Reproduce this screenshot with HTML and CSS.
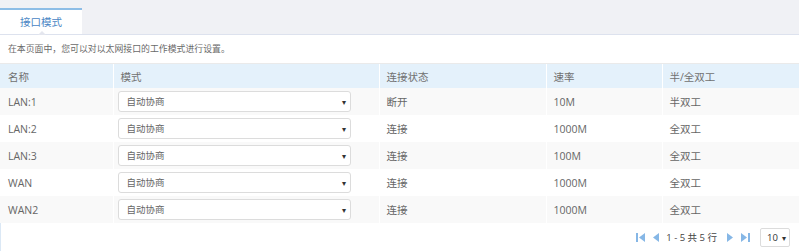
FILE: index.html
```html
<!DOCTYPE html>
<html lang="zh-CN">
<head>
    <meta charset="UTF-8">
    <title>接口模式</title>
    <link rel="stylesheet" href="styles.css">
</head>
<body>
    <div class="tabbar">
        <div class="tab">接口模式</div>
    </div>
    <div class="desc">在本页面中，您可以对以太网接口的工作模式进行设置。</div>
    <table class="grid">
        <colgroup>
            <col class="c-name">
            <col class="c-mode">
            <col class="c-state">
            <col class="c-rate">
            <col>
        </colgroup>
        <thead>
            <tr>
                <th>名称</th>
                <th>模式</th>
                <th>连接状态</th>
                <th>速率</th>
                <th>半/全双工</th>
            </tr>
        </thead>
        <tbody>
            <tr>
                <td>LAN:1</td>
                <td><div class="select">自动协商<span class="arrow">▾</span></div></td>
                <td>断开</td>
                <td>10M</td>
                <td>半双工</td>
            </tr>
            <tr>
                <td>LAN:2</td>
                <td><div class="select">自动协商<span class="arrow">▾</span></div></td>
                <td>连接</td>
                <td>1000M</td>
                <td>全双工</td>
            </tr>
            <tr>
                <td>LAN:3</td>
                <td><div class="select">自动协商<span class="arrow">▾</span></div></td>
                <td>连接</td>
                <td>100M</td>
                <td>全双工</td>
            </tr>
            <tr>
                <td>WAN</td>
                <td><div class="select">自动协商<span class="arrow">▾</span></div></td>
                <td>连接</td>
                <td>1000M</td>
                <td>全双工</td>
            </tr>
            <tr>
                <td>WAN2</td>
                <td><div class="select">自动协商<span class="arrow">▾</span></div></td>
                <td>连接</td>
                <td>1000M</td>
                <td>全双工</td>
            </tr>
        </tbody>
    </table>
    <div class="pager">
        <svg class="pg-icon" width="11" height="11" viewBox="0 0 11 11"><rect x="0" y="1" width="2" height="9"/><polygon points="9,1 9,10 3,5.5"/></svg>
        <svg class="pg-icon" width="9" height="11" viewBox="0 0 9 11"><polygon points="8,1 8,10 2,5.5"/></svg>
        <span class="pg-text">1 - 5 共 5 行</span>
        <svg class="pg-icon" width="9" height="11" viewBox="0 0 9 11"><polygon points="1,1 1,10 7,5.5"/></svg>
        <svg class="pg-icon" width="11" height="11" viewBox="0 0 11 11"><polygon points="2,1 2,10 8,5.5"/><rect x="9" y="1" width="2" height="9"/></svg>
        <div class="page-size">10<span class="arrow">▾</span></div>
    </div>
</body>
</html>
```

FILE: styles.css
```css
body {
    margin: 0;
    font-family: "Open Sans", "Noto Sans CJK SC", sans-serif;
    font-size: 10.5px;
    color: #666;
    background: #fff;
}

.tabbar {
    height: 26px;
    padding-top: 8px;
    background: #f0f1f5;
    border-bottom: 1px solid #dde2ee;
    display: flex;
}

.tab {
    width: 82px;
    height: 24px;
    line-height: 24px;
    background: #fff;
    border-top: 2px solid #8dbde6;
    color: #4a86c4;
    font-size: 10.5px;
    text-align: center;
    position: relative;
}

.tab::after {
    content: "";
    position: absolute;
    left: 38px;
    bottom: -1px;
    border-left: 4px solid transparent;
    border-right: 4px solid transparent;
    border-bottom: 4px solid #e4e6ee;
}

.desc {
    height: 28px;
    line-height: 28px;
    padding-left: 8px;
    font-size: 8.9px;
    color: #6a6a6a;
    border-bottom: 1px solid #eaeaea;
}

.grid {
    width: 100%;
    border-collapse: collapse;
    table-layout: fixed;
}

.c-name { width: 113px; }
.c-mode { width: 266px; }
.c-state { width: 167px; }
.c-rate { width: 116px; }

.grid th {
    height: 24px;
    padding: 0 0 0 7px;
    background: #e4f1fb;
    font-weight: normal;
    text-align: left;
    color: #707070;
    border-left: 1px solid #fff;
}

.grid th:first-child,
.grid td:first-child {
    padding-left: 8px;
    border-left: none;
}

.grid td {
    height: 27px;
    padding: 0 0 0 7px;
    border-left: 1px solid #fff;
    color: #666;
}

.grid tbody tr:nth-child(odd) td {
    background: #f9f9f9;
}

.grid td:nth-child(2) {
    padding-left: 4px;
}

.select {
    width: 223px;
    height: 19px;
    line-height: 19px;
    padding-left: 8px;
    border: 1px solid #dcdcdc;
    border-radius: 3px;
    background: #fff;
    font-size: 9.5px;
    color: #666;
    position: relative;
}

.select .arrow {
    position: absolute;
    right: 4px;
    top: 0;
    font-size: 8px;
    color: #333;
}

.pager {
    height: 28px;
    display: flex;
    align-items: center;
    justify-content: flex-end;
    padding-right: 9px;
    gap: 4px;
    border-left: 1px solid #dbe8f5;
}

.pg-icon {
    fill: #86b7e6;
}

.pg-text {
    margin: 0 5px 0 2px;
    color: #444;
    font-size: 9.5px;
}

.page-size {
    width: 22px;
    height: 17px;
    line-height: 17px;
    margin-left: 6px;
    padding-left: 6px;
    border: 1px solid #dcdcdc;
    border-radius: 2px;
    font-size: 9.5px;
    color: #333;
    position: relative;
}

.page-size .arrow {
    position: absolute;
    right: 3px;
    top: 0;
    font-size: 8px;
}
```
